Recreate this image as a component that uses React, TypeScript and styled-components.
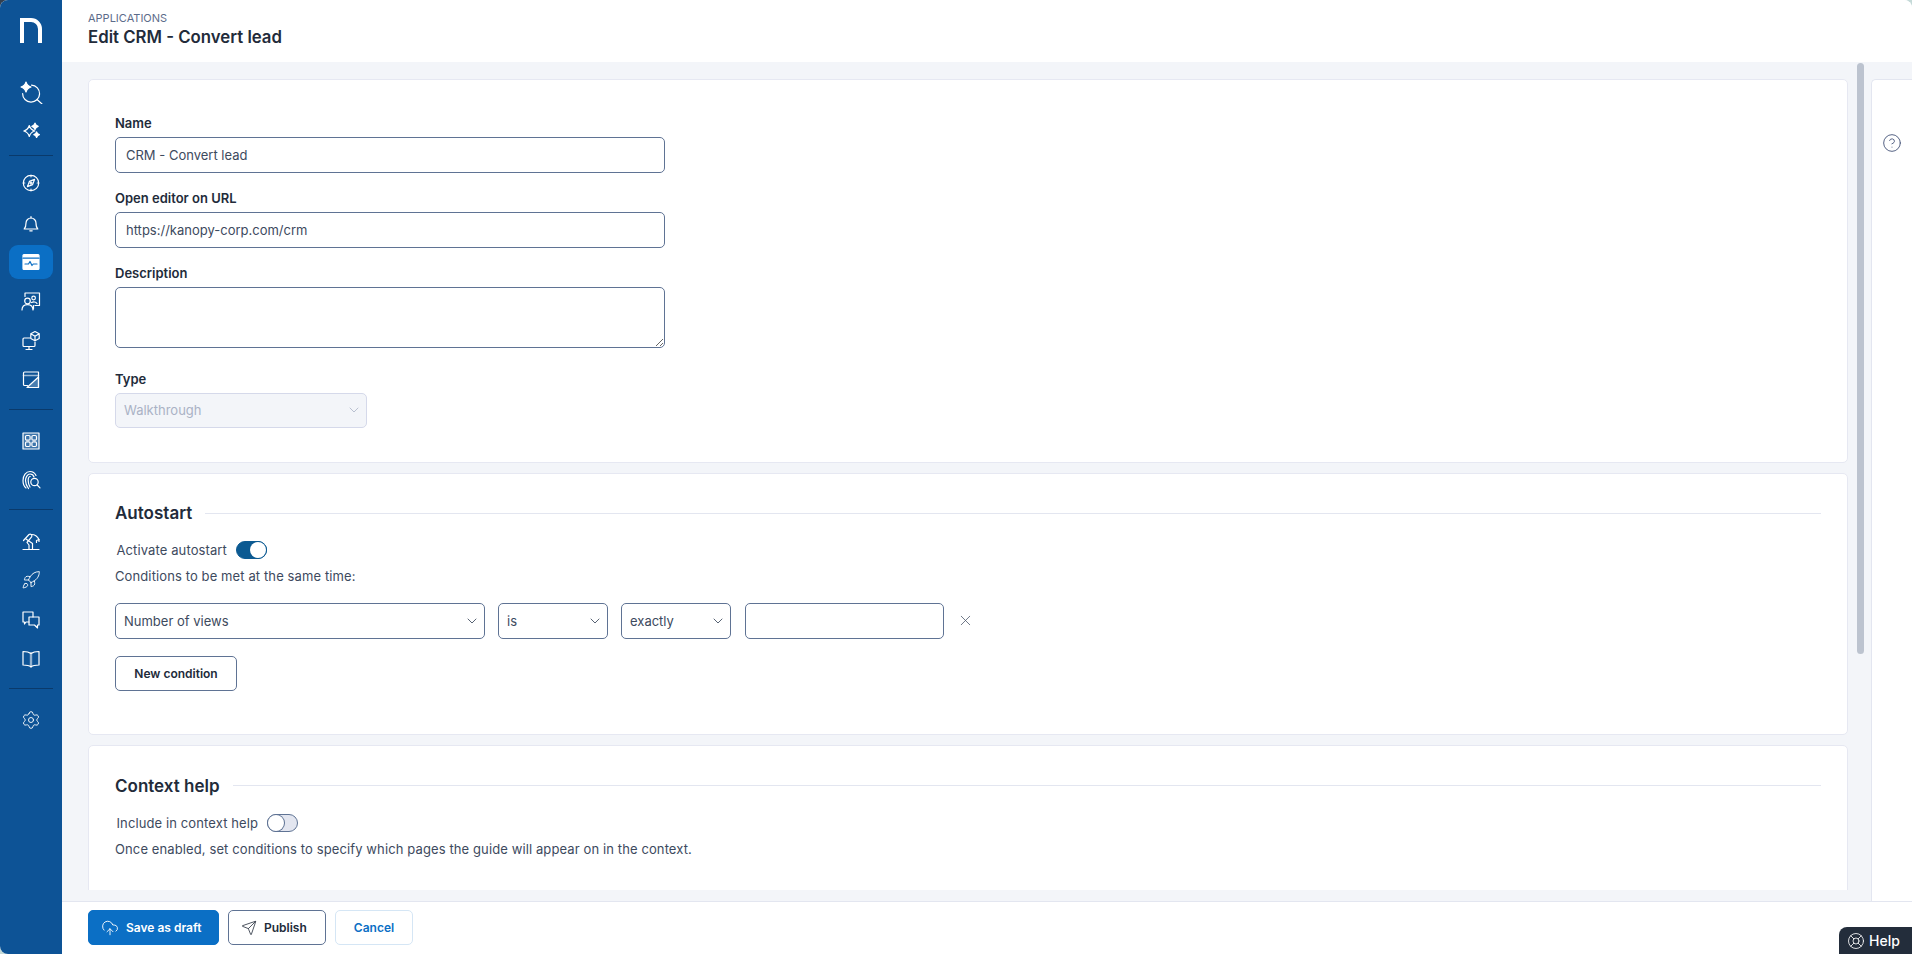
import React from "react";
import styled, {createGlobalStyle} from "styled-components";
import {ChevronDown, CircleHelp, CloudUpload, LifeBuoy, Rocket, Send, Settings, X} from "lucide-react";

const GlobalStyle = createGlobalStyle`
    html, body {
        margin: 0;
        height: 100%;
        overflow: hidden;
        background: linear-gradient(135deg, #33404f 0 10%, #c5dad8 10%);
        font-family: Inter, "Liberation Sans", sans-serif;
    }
    * {
        box-sizing: border-box;
    }
`;

const Shell = styled.div`
    display: flex;
    height: 100vh;
    border-radius: 8px;
    overflow: hidden;
    background: white;
`;

const Sidebar = styled.nav`
    width: 62px;
    flex: none;
    background: #0d5396;
    display: flex;
    flex-direction: column;
    align-items: center;
    padding-top: 18px;
`;

const Logo = styled.svg`
    display: block;
    width: 22px;
    height: 25px;
    margin-bottom: 31.5px;
`;

const NavItem = styled.div<{$active?: boolean}>`
    width: 44px;
    height: 34.5px;
    margin-bottom: 5px;
    flex: none;
    display: flex;
    align-items: center;
    justify-content: center;
    border-radius: 9px;
    background: ${(p) => (p.$active ? "#0b6fc5" : "transparent")};
    color: white;
`;

const NavDivider = styled.div<{$tight?: boolean}>`
    width: 44px;
    height: 1px;
    flex: none;
    background: #0a3a6b;
    margin: ${(p) => (p.$tight ? "1px 0 10px" : "6px 0 14px")};
`;

const Icon = styled.svg.attrs({viewBox: "0 0 24 24", fill: "none", stroke: "currentColor", strokeWidth: 1.2})`
    display: block;
    width: 24px;
    height: 24px;
    stroke-linecap: round;
    stroke-linejoin: round;
`;

const Main = styled.div`
    flex: 1;
    min-width: 0;
    display: flex;
    flex-direction: column;
`;

const Header = styled.header`
    height: 62px;
    flex: none;
    padding: 11px 26px 0;
    background: white;
`;

const Breadcrumb = styled.div`
    font-size: 11px;
    line-height: 15px;
    color: #5c6b8a;
    text-transform: uppercase;
`;

const PageTitle = styled.h1`
    margin: 0;
    font-size: 16.8px;
    line-height: 22px;
    font-weight: 600;
    color: #222b3a;
`;

const Body = styled.div`
    flex: 1;
    min-height: 0;
    display: flex;
    background: #f3f5f9;
`;

const ScrollArea = styled.div`
    flex: 1;
    min-width: 0;
    padding: 17px 0 11px 26px;
    display: flex;
`;

const Cards = styled.div`
    width: 1760px;
    flex: none;
    display: flex;
    flex-direction: column;
    gap: 10px;
    overflow: hidden;
`;

const ScrollTrack = styled.div`
    width: 23px;
    flex: none;
    margin-top: -16px;
    padding-left: 9px;
`;

const ScrollThumb = styled.div`
    width: 7px;
    height: 591px;
    border-radius: 4px;
    background: #bcc3cf;
`;

const Card = styled.section<{$bottom: number; $top: number}>`
    flex: none;
    background: white;
    border: 1px solid #e6e8f2;
    border-radius: 5px;
    padding: ${(p) => p.$top}px 26px ${(p) => p.$bottom}px 26px;
`;

const Field = styled.div<{$gap?: number}>`
    margin-bottom: ${(p) => p.$gap ?? 17.5}px;
    &:last-child {
        margin-bottom: 0;
    }
`;

const Label = styled.label`
    display: block;
    font-size: 13px;
    line-height: 16px;
    font-weight: 600;
    color: #222b3a;
    margin-bottom: 6px;
`;

const TextInput = styled.input<{$width: number; $offset?: number}>`
    display: block;
    width: ${(p) => p.$width}px;
    height: 35.5px;
    margin-left: ${(p) => p.$offset ?? 0}px;
    padding: 0 10px;
    border: 1px solid #5f7394;
    border-radius: 5px;
    background: white;
    font: 13px Inter, "Liberation Sans", sans-serif;
    color: #3d4a5e;
    outline: none;
`;

const TextArea = styled.textarea`
    display: block;
    width: 550px;
    height: 61px;
    padding: 8px 10px;
    border: 1px solid #5f7394;
    border-radius: 5px;
    background: white;
    outline: none;
`;

const SelectBox = styled.div<{$width: number; $disabled?: boolean; $offset?: number}>`
    width: ${(p) => p.$width}px;
    height: ${(p) => (p.$disabled ? 35 : 35.5)}px;
    margin-left: ${(p) => p.$offset ?? 0}px;
    flex: none;
    display: flex;
    align-items: center;
    justify-content: space-between;
    padding: 0 4px ${(p) => (p.$disabled ? 1 : 0)}px 8px;
    border: 1px solid ${(p) => (p.$disabled ? "#d5d9ea" : "#5f7394")};
    border-radius: 5px;
    background: ${(p) => (p.$disabled ? "#f3f5f9" : "white")};
    color: ${(p) => (p.$disabled ? "#aab2c5" : "#3d4a5e")};
    font-size: 13px;
`;

const SectionHeading = styled.div`
    display: flex;
    align-items: center;
    gap: 13px;
    height: 24px;
    margin-bottom: 16px;
`;

const SectionTitle = styled.h2`
    margin: 0;
    font-size: 17px;
    line-height: 24px;
    font-weight: 600;
    color: #222b3a;
    white-space: nowrap;
`;

const SectionRule = styled.div`
    flex: 1;
    height: 1px;
    background: #e3e6f0;
`;

const ToggleRow = styled.div`
    display: flex;
    align-items: center;
    gap: 9px;
    height: 18px;
    padding-left: 1.5px;
    margin-bottom: 9px;
    font-size: 13px;
    letter-spacing: 0.11px;
    color: #3d4a5e;
`;

const Toggle = styled.div<{$on?: boolean}>`
    width: 31px;
    height: 18px;
    display: flex;
    justify-content: ${(p) => (p.$on ? "flex-end" : "flex-start")};
    border-radius: 9px;
    border: 1px solid ${(p) => (p.$on ? "#0c5a92" : "#5f7394")};
    background: ${(p) => (p.$on ? "#0c5a92" : "#e3e6f0")};
`;

const Knob = styled.div<{$on?: boolean}>`
    width: 16px;
    height: 16px;
    border-radius: 50%;
    background: white;
    box-shadow: 0 0 0 1px ${(p) => (p.$on ? "#0c5a92" : "#5f7394")};
`;

const HelpText = styled.p`
    margin: 0;
    font-size: 13px;
    line-height: 16px;
    letter-spacing: 0.11px;
    color: #3d4a5e;
`;

const ConditionRow = styled.div`
    display: flex;
    align-items: center;
    margin: 19px 0 17px;
`;

const CloseButton = styled.div`
    display: flex;
    margin-left: 12.5px;
    color: #4a5568;
`;

const Button = styled.button<{$variant?: "primary" | "ghost"; $width: number; $icon?: boolean}>`
    width: ${(p) => p.$width}px;
    height: 35px;
    flex: none;
    display: flex;
    align-items: center;
    justify-content: ${(p) => (p.$icon ? "flex-start" : "center")};
    gap: 7px;
    border-radius: 5px;
    border: 1px solid
        ${(p) => (p.$variant === "primary" ? "#0b6fc5" : p.$variant === "ghost" ? "#d5e6f5" : "#5f7394")};
    background: ${(p) => (p.$variant === "primary" ? "#0b6fc5" : "white")};
    color: ${(p) => (p.$variant === "primary" ? "white" : p.$variant === "ghost" ? "#0b6fc5" : "#222b3a")};
    font: 600 12px Inter, "Liberation Sans", sans-serif;
    padding: 0 0 0 ${(p) => (p.$icon ? 12 : 0)}px;
`;

const RightPanel = styled.aside`
    width: 41px;
    flex: none;
    margin-top: 17px;
    background: white;
    border-left: 1px solid #e3e6f0;
    border-top: 1px solid #e3e6f0;
    border-top-left-radius: 5px;
    padding: 53px 0 0 10px;
    color: #47557a;
`;

const Footer = styled.footer`
    height: 53px;
    flex: none;
    border-top: 1px solid #e3e6f0;
    background: white;
    padding: 8px 0 0 26px;
    display: flex;
    gap: 9px;
`;

const HelpTab = styled.div`
    position: absolute;
    right: 0;
    bottom: 0;
    width: 73px;
    height: 27px;
    display: flex;
    align-items: center;
    gap: 4px;
    padding-left: 8px;
    background: #232d3b;
    border-top-left-radius: 8px;
    color: white;
    font-size: 14px;
    font-weight: 500;
`;

// small four point star used by the sparkle icons
const star = (x: number, y: number, r: number) => {
    const k = r * 0.22;
    return `M${x} ${y - r}Q${x + k} ${y - k} ${x + r} ${y}Q${x + k} ${y + k} ${x} ${y + r}Q${x - k} ${y + k} ${x - r} ${y}Q${x - k} ${y - k} ${x} ${y - r}Z`;
};

function NavIcons() {
    return (
        <>
            <NavItem>
                <Icon>
                    <path d="M12.5 5.1A8.5 8.5 0 1 1 3.6 13.5" />
                    <path d="M18 19.5l5 4.5" />
                    <path d={star(7, 7, 5)} fill="currentColor" />
                </Icon>
            </NavItem>
            <NavItem>
                <Icon>
                    <path d={star(10.3, 12, 5.5)} />
                    <path d={star(16, 7.4, 3.2)} fill="currentColor" />
                    <path d={star(17.6, 15.7, 2.8)} fill="currentColor" />
                </Icon>
            </NavItem>
            <NavDivider $tight />
            <NavItem>
                <Icon>
                    <circle cx="12" cy="12" r="7.7" />
                    <path d="M12 4.3v1.5M12 18.2v1.5M4.3 12h1.5M18.2 12h1.5" />
                    <path d="M15.6 8.4l-2 5.2-5.2 2 2-5.2z" />
                    <circle cx="12" cy="12" r="1" />
                </Icon>
            </NavItem>
            <NavItem>
                <Icon>
                    <path d="M5.2 19c1.3-1.2 1.8-2.6 1.8-6a5 5 0 0 1 10 0c0 3.4.5 4.8 1.8 6z" />
                    <path d="M12 8V6.6M10.8 20.8h2.4" />
                </Icon>
            </NavItem>
            <NavItem $active>
                <Icon>
                    <rect x="4" y="4.5" width="16" height="15" rx="1" fill="currentColor" />
                    <path d="M4 8.2h16" stroke="#0b6fc5" />
                    <path d="M6 14h3.5l1.5-2.5 2 4 1.2-1.5H18" stroke="#0b6fc5" />
                </Icon>
            </NavItem>
            <NavItem>
                <Icon>
                    <path d="M6 7.5V4h14.5v12.5H16M14.5 16.5V20" />
                    <circle cx="8.5" cy="12" r="2.8" />
                    <path d="M3 21c0-3.4 2.2-5.4 5.5-5.4S14 17.6 14 21" />
                    <circle cx="14.6" cy="9" r="1.8" />
                    <path d="M12.5 13.5c2-1 4.5-.5 5.5 1" />
                </Icon>
            </NavItem>
            <NavItem>
                <Icon>
                    <path d="M11 9H5a1 1 0 0 0-1 1v6.5a1 1 0 0 0 1 1h10a1 1 0 0 0 1-1V13" />
                    <path d="M10 17.5v3M7 20.5h6" />
                    <path d="M16 2.5l4.2 2.2v4.8L16 11.7l-4.2-2.2V4.7zM16 7.2l4.2-2.5M16 7.2l-4.2-2.5M16 7.2v4.5" />
                </Icon>
            </NavItem>
            <NavItem>
                <Icon>
                    <path d="M4.5 12V5a1 1 0 0 1 1-1h14v15.5H9" />
                    <path d="M4.5 7.5h15" strokeWidth="1.6" opacity="0.6" />
                    <path d="M19.5 9L8 19.5h11.5z" fill="currentColor" fillOpacity="0.25" />
                    <path d="M4.5 12v4.5a1 1 0 0 0 1 1h3" />
                </Icon>
            </NavItem>
            <NavDivider />
            <NavItem>
                <Icon>
                    <rect x="4" y="4" width="16" height="16" fill="currentColor" fillOpacity="0.2" />
                    <rect x="6.5" y="6.5" width="4.6" height="4.6" rx="1.2" />
                    <rect x="12.9" y="6.5" width="4.6" height="4.6" rx="1.2" />
                    <rect x="6.5" y="12.9" width="4.6" height="4.6" rx="1.2" />
                    <rect x="12.9" y="12.9" width="4.6" height="4.6" rx="1.2" />
                </Icon>
            </NavItem>
            <NavItem>
                <Icon>
                    <path d="M7 20c-2-1.5-3-4-3-7.5C4 7.5 7 3.5 11 3.5c3 0 5 1.8 6 4" />
                    <path d="M9.5 20.5C7.5 18 6.5 15.5 6.5 12.5c0-3 2-6.5 4.5-6.5 2 0 3.5 1 4 3" />
                    <path d="M11 19c-1-1.5-1.8-4-1.8-6.5 0-2 .8-4 2-4" />
                    <circle cx="15.5" cy="14" r="3.7" />
                    <path d="M18.2 17l2.8 2.8" />
                </Icon>
            </NavItem>
            <NavDivider />
            <NavItem>
                <Icon>
                    <path d="M4 20.5h16" />
                    <path d="M4.5 11.5L10 5.5a1.8 1.8 0 0 1 2.6 2.4L8 13.5l2 2.5v4" />
                    <path d="M13.5 20v-5.5L7 10" />
                    <path d="M12.5 5.5c3 0 6 2 7.5 5" />
                    <path d="M17.5 13.5v-2l2.5-1v2" />
                </Icon>
            </NavItem>
            <NavItem>
                <Rocket size={20} strokeWidth={1.1} />
            </NavItem>
            <NavItem>
                <Icon>
                    <path d="M10 14H7l-1.5 2v-2H4V4h10v5" />
                    <path d="M10 9h10v8h-1.5v3l-3-3H10z" />
                </Icon>
            </NavItem>
            <NavItem>
                <Icon>
                    <path d="M12 6.5C10 5 7 4.5 4 4.5V18c3 0 6 .3 8 1.8 2-1.5 5-1.8 8-1.8V4.5c-3 0-6 .5-8 2z" />
                    <path d="M12 6.5v13" strokeWidth="2.4" opacity="0.55" />
                </Icon>
            </NavItem>
            <NavDivider />
            <NavItem>
                <Settings size={20} strokeWidth={1.1} />
            </NavItem>
        </>
    );
}

export default function App() {
    return (
        <Shell>
            <GlobalStyle />
            <Sidebar>
                <Logo viewBox="0 0 22 25">
                    <path
                        d="M0 25V0h11a11 11 0 0 1 11 11v14h-4V11a7 7 0 0 0-7-7H4v21z"
                        fill="white"
                    />
                </Logo>
                <NavIcons />
            </Sidebar>
            <Main>
                <Header>
                    <Breadcrumb>Applications</Breadcrumb>
                    <PageTitle>Edit CRM - Convert lead</PageTitle>
                </Header>
                <Body>
                    <ScrollArea>
                        <Cards>
                            <Card $top={35} $bottom={34}>
                                <Field>
                                    <Label>Name</Label>
                                    <TextInput $width={550} defaultValue="CRM - Convert lead" />
                                </Field>
                                <Field>
                                    <Label>Open editor on URL</Label>
                                    <TextInput $width={550} defaultValue="https://kanopy-corp.com/crm" />
                                </Field>
                                <Field $gap={23}>
                                    <Label>Description</Label>
                                    <TextArea />
                                </Field>
                                <Field>
                                    <Label>Type</Label>
                                    <SelectBox $width={252} $disabled>
                                        Walkthrough
                                        <ChevronDown size={16} strokeWidth={1.2} />
                                    </SelectBox>
                                </Field>
                            </Card>
                            <Card $top={27} $bottom={43}>
                                <SectionHeading>
                                    <SectionTitle>Autostart</SectionTitle>
                                    <SectionRule />
                                </SectionHeading>
                                <ToggleRow>
                                    Activate autostart
                                    <Toggle $on>
                                        <Knob $on />
                                    </Toggle>
                                </ToggleRow>
                                <HelpText>Conditions to be met at the same time:</HelpText>
                                <ConditionRow>
                                    <SelectBox $width={370}>
                                        Number of views
                                        <ChevronDown size={16} strokeWidth={1.3} />
                                    </SelectBox>
                                    <SelectBox $width={110} $offset={13}>
                                        is
                                        <ChevronDown size={16} strokeWidth={1.3} />
                                    </SelectBox>
                                    <SelectBox $width={110} $offset={13}>
                                        exactly
                                        <ChevronDown size={16} strokeWidth={1.3} />
                                    </SelectBox>
                                    <TextInput $width={199} $offset={14} />
                                    <CloseButton>
                                        <X size={17} strokeWidth={1.1} />
                                    </CloseButton>
                                </ConditionRow>
                                <Button $width={122}>New condition</Button>
                            </Card>
                            <Card $top={28} $bottom={43}>
                                <SectionHeading>
                                    <SectionTitle>Context help</SectionTitle>
                                    <SectionRule />
                                </SectionHeading>
                                <ToggleRow>
                                    Include in context help
                                    <Toggle>
                                        <Knob />
                                    </Toggle>
                                </ToggleRow>
                                <HelpText>
                                    Once enabled, set conditions to specify which pages the guide will appear on in the context.
                                </HelpText>
                            </Card>
                        </Cards>
                        <ScrollTrack>
                            <ScrollThumb />
                        </ScrollTrack>
                    </ScrollArea>
                    <RightPanel>
                        <CircleHelp size={20} strokeWidth={1.1} />
                    </RightPanel>
                </Body>
                <Footer>
                    <Button $variant="primary" $width={131} $icon>
                        <CloudUpload size={18} strokeWidth={1.2} />
                        Save as draft
                    </Button>
                    <Button $width={98} $icon>
                        <Send size={16} strokeWidth={1.2} />
                        Publish
                    </Button>
                    <Button $variant="ghost" $width={78}>Cancel</Button>
                </Footer>
            </Main>
            <HelpTab>
                <LifeBuoy size={18} strokeWidth={1.1} />
                Help
            </HelpTab>
        </Shell>
    );
}
